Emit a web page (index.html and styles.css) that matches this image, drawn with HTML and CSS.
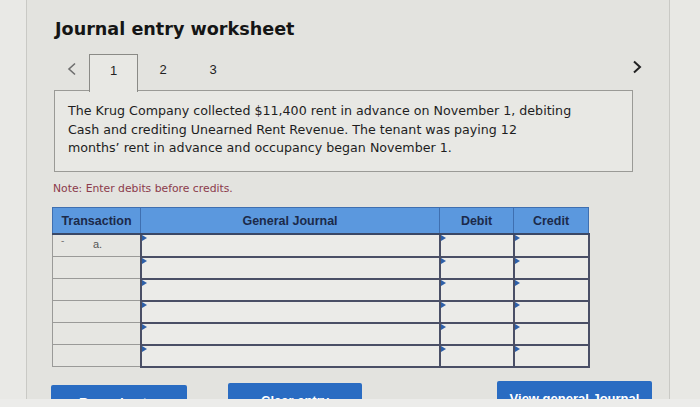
FILE: index.html
```html
<!DOCTYPE html>
<html>
<head>
<meta charset="utf-8">
<link rel="stylesheet" href="styles.css">
</head>
<body>
<div class="page">
  <div class="gutter"></div>
  <div class="panel">
    <h1 class="title">Journal entry worksheet</h1>
    <div class="tabrow">
      <span class="arrow left">
        <svg width="10" height="14" viewBox="0 0 10 14"><path d="M8 1.5 L2 7 L8 12.5" fill="none" stroke="#6e6e6e" stroke-width="1.6"/></svg>
      </span>
      <span class="tab active">1</span>
      <span class="tab">2</span>
      <span class="tab">3</span>
      <span class="arrow right">
        <svg width="10" height="14" viewBox="0 0 10 14"><path d="M2 1.5 L8 7 L2 12.5" fill="none" stroke="#222" stroke-width="2"/></svg>
      </span>
    </div>
    <div class="question">
      The Krug Company collected $11,400 rent in advance on November 1, debiting<br>Cash and crediting Unearned Rent Revenue. The tenant was paying 12<br>months’ rent in advance and occupancy began November 1.
    </div>
    <p class="note">Note: Enter debits before credits.</p>
    <table class="journal">
      <thead>
        <tr>
          <th class="c-tr">Transaction</th>
          <th class="c-gj">General Journal</th>
          <th class="c-db">Debit</th>
          <th class="c-cr">Credit</th>
        </tr>
      </thead>
      <tbody>
        <tr><td class="tr"><span class="dash">-</span>a.</td><td class="in"><i></i></td><td class="in"><i></i></td><td class="in"><i></i></td></tr>
        <tr><td class="tr"></td><td class="in"><i></i></td><td class="in"><i></i></td><td class="in"><i></i></td></tr>
        <tr><td class="tr"></td><td class="in"><i></i></td><td class="in"><i></i></td><td class="in"><i></i></td></tr>
        <tr><td class="tr"></td><td class="in"><i></i></td><td class="in"><i></i></td><td class="in"><i></i></td></tr>
        <tr><td class="tr"></td><td class="in"><i></i></td><td class="in"><i></i></td><td class="in"><i></i></td></tr>
        <tr><td class="tr"></td><td class="in"><i></i></td><td class="in"><i></i></td><td class="in"><i></i></td></tr>
      </tbody>
    </table>
    <div class="buttons">
      <button class="btn b1">Record entry</button>
      <button class="btn b2">Clear entry</button>
      <button class="btn b3">View general Journal</button>
    </div>
  </div>
</div>
<div class="bottom"></div>
</body>
</html>
```
FILE: styles.css
```css
html, body {
  margin: 0;
  padding: 0;
}
body {
  width: 700px;
  height: 407px;
  overflow: hidden;
  background: #e8e8e4;
  font-family: "DejaVu Sans", Verdana, sans-serif;
  color: #222;
}
.page {
  display: flex;
  height: 399px;
}
.gutter {
  width: 26px;
  background: #e9e9e6;
}
.panel {
  width: 644px;
  height: 399px;
  overflow: hidden;
  background: #e3e3df;
  border-left: 1px solid #c9c9c5;
  border-right: 1px solid #c9c9c5;
  padding-left: 27px;
  box-sizing: border-box;
}
.title {
  margin: 17px 0 0 1px;
  font-size: 17.6px;
  font-weight: bold;
  color: #151515;
  line-height: 24px;
}
.tabrow {
  display: flex;
  align-items: stretch;
  width: 590px;
  height: 37px;
  margin-top: 13px;
  position: relative;
  z-index: 2;
}
.arrow {
  display: flex;
  align-items: center;
  justify-content: center;
}
.arrow.left {
  width: 35px;
  padding-bottom: 8px;
  padding-left: 1px;
  box-sizing: border-box;
}
.arrow.right {
  margin-left: auto;
  width: 14px;
  padding-bottom: 12px;
}
.tab {
  width: 50px;
  display: flex;
  justify-content: center;
  padding-top: 8px;
  font-family: "Liberation Sans", Arial, sans-serif;
  font-size: 13px;
  color: #222;
  box-sizing: border-box;
}
.tab.active {
  width: 49px;
  border: 1px solid #8a8a86;
  border-bottom: none;
  background: #e8e8e4;
  height: 38px;
}
.question {
  width: 579px;
  box-sizing: border-box;
  margin-top: -1px;
  border: 1px solid #9a9a96;
  background: #e8e8e4;
  padding: 11px 10px 12px 13px;
  font-size: 12.65px;
  line-height: 18.5px;
  color: #1e1e1e;
  height: 82px;
  white-space: nowrap;
  position: relative;
  z-index: 1;
}
.note {
  margin: 10px 0 0 -1px;
  font-size: 10.8px;
  color: #8b3b4b;
  line-height: 14px;
}
.journal {
  margin-top: 11px;
  margin-left: -2px;
  border-collapse: collapse;
  width: 534px;
  table-layout: fixed;
}
.journal th {
  background: #5b98de;
  color: #1b2a4a;
  font-family: "Liberation Sans", Arial, sans-serif;
  font-weight: bold;
  font-size: 12.5px;
  height: 25px;
  border: 1px solid #3f6fb0;
  border-bottom: 2px solid #3a4866;
  padding: 0;
}
.c-tr { width: 87px; }
.c-gj { width: 298px; }
.c-db { width: 73px; }
.c-cr { width: 74px; }
.journal td {
  height: 18px;
  padding: 0;
  position: relative;
}
.journal td.tr {
  background: #e6e6e2;
  border: 1px solid #9a9a98;
  border-right: 2px solid #4a4f66;
  font-family: "Liberation Sans", Arial, sans-serif;
  font-size: 11px;
  color: #555;
  padding-left: 40px;
  vertical-align: top;
  padding-top: 3px;
}
.dash {
  position: absolute;
  left: 8px;
  top: 0;
  color: #777;
  font-size: 10px;
}
.journal td.in {
  background: #ebebe8;
  border: 2px solid #4a4f66;
  height: 19px;
}
.journal td.in i {
  position: absolute;
  left: 0;
  top: 0;
  width: 0;
  height: 0;
  border-top: 3px solid transparent;
  border-bottom: 3px solid transparent;
  border-left: 5px solid #2d5fa8;
}
.buttons {
  display: flex;
  margin-top: 13px;
  margin-left: -3px;
}
.btn {
  background: #2a6cc2;
  color: #fff;
  border: none;
  border-radius: 2px;
  font-family: "Liberation Sans", Arial, sans-serif;
  font-weight: bold;
  font-size: 13px;
  height: 34px;
  padding: 0;
  text-align: center;
  line-height: 35px;
}
.b1 { width: 136px; margin-top: 4px; }
.b2 { width: 134px; margin-left: 41px; margin-top: 2px; }
.b3 { width: 155px; margin-left: 135px; }
.bottom {
  height: 8px;
  background: #ececea;
}
```
